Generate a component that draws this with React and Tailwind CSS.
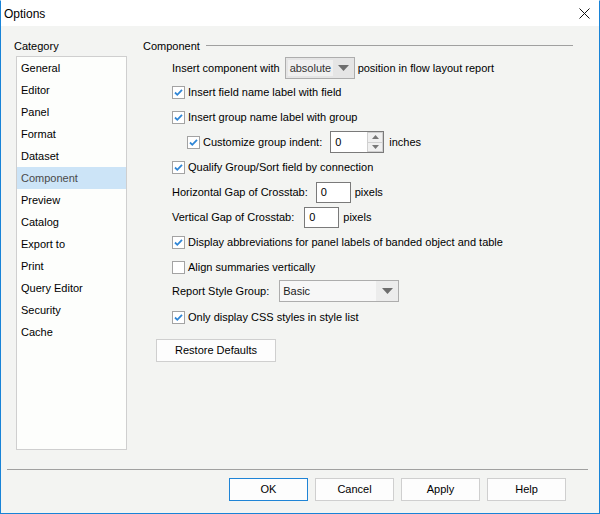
import React from 'react';

const font = { fontFamily: '"Liberation Sans", Arial, sans-serif' };

const categories = ['General', 'Editor', 'Panel', 'Format', 'Dataset', 'Component', 'Preview', 'Catalog', 'Export to', 'Print', 'Query Editor', 'Security', 'Cache'];

function Check({ checked }) {
  return (
    <span className="w-[13px] h-[13px] shrink-0 border border-[#a3a3a3] bg-white flex items-center justify-center">
      {checked && (
        <svg width="11" height="11" viewBox="0 0 11 11">
          <path d="M2 5.5 L4.3 7.8 L9 2.8" fill="none" stroke="#2f86d6" strokeWidth="1.8" />
        </svg>
      )}
    </span>
  );
}

function CheckRow({ checked, label, mt }) {
  return (
    <div className={'h-[22px] flex items-center gap-[3px] ' + mt}>
      <Check checked={checked} />
      <span>{label}</span>
    </div>
  );
}

function Arrow() {
  return (
    <svg width="11" height="6" viewBox="0 0 11 6">
      <path d="M0 0 L11 0 L5.5 6 Z" fill="#6d6d6d" />
    </svg>
  );
}

function Button({ children, primary, className }) {
  return (
    <div className={'h-[23px] flex items-center justify-center border bg-[#fdfdfd] ' + (primary ? 'border-[#1f84d6] ' : 'border-[#cfcfcf] ') + (className || '')}>
      {children}
    </div>
  );
}

export default function App() {
  return (
    <div style={font} className="w-[600px] h-[514px] flex flex-col border border-[#1883d7] border-t-white text-[11px] text-black bg-[#f3f4f2] overflow-hidden">
      <div className="h-[25px] bg-white flex items-center justify-between pl-[3px] pr-[9px]">
        <span className="text-[12px]">Options</span>
        <svg width="11" height="11" viewBox="0 0 11 11">
          <path d="M0.5 0.5 L10.5 10.5 M10.5 0.5 L0.5 10.5" stroke="#111" strokeWidth="1" />
        </svg>
      </div>
      <div className="flex-1 flex flex-col">
        <div className="flex pt-[12px]">
          <div className="pl-[13px] w-[142px] shrink-0">
            <div className="h-[16px] flex items-center">Category</div>
            <div className="mt-[2px] ml-[2px] w-[111px] h-[394px] border border-[#cfcfcf] bg-[#fdfefc] flex flex-col">
              {categories.map(function (c) {
                const sel = c === 'Component';
                return (
                  <div key={c} className={'h-[22px] shrink-0 flex items-center pl-[4px] ' + (sel ? 'bg-[#cce4f7] text-[#4a4a4a]' : '')}>
                    {c}
                  </div>
                );
              })}
            </div>
          </div>
          <div className="flex-1 pr-[26px]">
            <div className="h-[16px] flex items-center gap-[6px]">
              <span>Component</span>
              <div className="flex-1 h-px bg-[#a0a0a0] -translate-y-[1px]" />
            </div>
            <div className="pl-[29px] flex flex-col">
              <div className="h-[22px] mt-[3px] flex items-center">
                <span>Insert component with</span>
                <div className="ml-[5px] w-[70px] h-[22px] border border-[#adadad] bg-[#e5e5e5] flex items-center">
                  <span className="ml-[2px] px-[2px] bg-[#f0f0f0] text-[#333]">absolute</span>
                  <span className="flex-1 flex justify-center"><Arrow /></span>
                </div>
                <span className="ml-[3px]">position in flow layout report</span>
              </div>
              <CheckRow checked label="Insert field name label with field" mt="mt-[2px]" />
              <CheckRow checked label="Insert group name label with group" mt="mt-[3px]" />
              <div className="h-[22px] mt-[3px] flex items-center">
                <div className="flex items-center gap-[3px] pl-[15px]">
                  <Check checked />
                  <span>Customize group indent:</span>
                </div>
                <div className="ml-[8px] w-[54px] h-[22px] border border-[#7a7a7a] bg-white flex items-center">
                  <span className="flex-1 pl-[4px]">0</span>
                  <div className="w-[16px] h-full flex flex-col">
                    <div className="flex-1 border border-[#d0d0d0] bg-[#f0f0f0] flex items-center justify-center">
                      <svg width="7" height="4" viewBox="0 0 7 4"><path d="M0 4 L7 4 L3.5 0 Z" fill="#777" /></svg>
                    </div>
                    <div className="flex-1 border border-t-0 border-[#d0d0d0] bg-[#f0f0f0] flex items-center justify-center">
                      <svg width="7" height="4" viewBox="0 0 7 4"><path d="M0 0 L7 0 L3.5 4 Z" fill="#777" /></svg>
                    </div>
                  </div>
                </div>
                <span className="ml-[5px]">inches</span>
              </div>
              <CheckRow checked label="Qualify Group/Sort field by connection" mt="mt-[3px]" />
              <div className="h-[22px] mt-[3px] flex items-center">
                <span>Horizontal Gap of Crosstab:</span>
                <div className="ml-[8px] w-[35px] h-[21px] border border-[#7a7a7a] bg-white flex items-center pl-[4px]">0</div>
                <span className="ml-[4px]">pixels</span>
              </div>
              <div className="h-[22px] mt-[3px] flex items-center">
                <span>Vertical Gap of Crosstab:</span>
                <div className="ml-[10px] w-[35px] h-[21px] border border-[#7a7a7a] bg-white flex items-center pl-[4px]">0</div>
                <span className="ml-[4px]">pixels</span>
              </div>
              <CheckRow checked label="Display abbreviations for panel labels of banded object and table" mt="mt-[3px]" />
              <CheckRow checked={false} label="Align summaries vertically" mt="mt-[3px]" />
              <div className="h-[22px] mt-[2px] flex items-center">
                <span>Report Style Group:</span>
                <div className="ml-[10px] w-[120px] h-[22px] border border-[#adadad] bg-[#f7f7f7] flex items-center">
                  <span className="flex-1 pl-[3px] text-[#222]">Basic</span>
                  <span className="w-[22px] h-full bg-[#ececec] flex items-center justify-center"><Arrow /></span>
                </div>
              </div>
              <CheckRow checked label="Only display CSS styles in style list" mt="mt-[4px]" />
            </div>
            <div className="mt-[11px] ml-[13px]">
              <Button className="w-[120px]">Restore Defaults</Button>
            </div>
          </div>
        </div>
        <div className="mt-[19px] ml-[6px] mr-[11px] h-[2px] border-t border-[#a0a0a0] border-b-white" />
        <div className="mt-[7px] flex justify-end gap-[7px] pr-[33px]">
          <Button primary className="w-[79px]">OK</Button>
          <Button className="w-[79px]">Cancel</Button>
          <Button className="w-[79px]">Apply</Button>
          <Button className="w-[79px]">Help</Button>
        </div>
      </div>
    </div>
  );
}
